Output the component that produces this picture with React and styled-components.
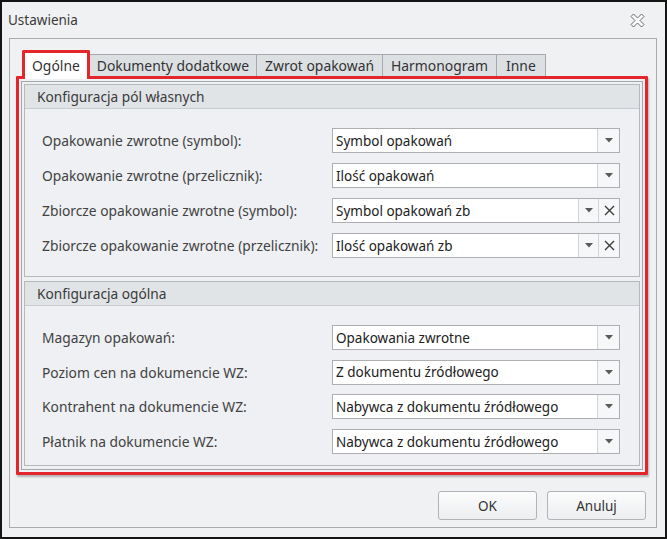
import React from 'react';
import styled, { createGlobalStyle } from 'styled-components';

const GlobalStyle = createGlobalStyle`
  html, body {
    margin: 0;
    padding: 0;
    background: #ffffff;
  }
  * {
    box-sizing: border-box;
  }
`;

const Window = styled.div`
  width: 667px;
  height: 539px;
  border: 2px solid #151515;
  background: #f0f1f2;
  font-family: 'Noto Sans', 'DejaVu Sans', sans-serif;
  font-size: 13.7px;
  color: #3a3a3a;
  display: flex;
  flex-direction: column;
`;

const TitleBar = styled.div`
  height: 36px;
  flex: none;
  display: flex;
  align-items: center;
  justify-content: space-between;
  padding: 0 20px 0 6px;
`;

const Title = styled.span`
  font-size: 13.5px;
  color: #3a3a3a;
`;

const Frame = styled.div`
  flex: 1;
  margin: 0 8px 9px 7px;
  border: 1px solid #a9abae;
  display: flex;
  flex-direction: column;
  padding: 11px 8px 0 6px;
`;

const TabStrip = styled.div`
  display: flex;
  align-items: flex-end;
  height: 26px;
  padding-left: 6px;
  position: relative;
  z-index: 1;
`;

const Tab = styled.div`
  height: ${(p) => (p.active ? '29px' : '22px')};
  margin-bottom: ${(p) => (p.active ? '-3px' : '0')};
  padding: 0 ${(p) => p.pad}px;
  display: flex;
  align-items: ${(p) => (p.active ? 'flex-start' : 'center')};
  padding-top: ${(p) => (p.active ? '3px' : '0')};
  background: ${(p) => (p.active ? '#ffffff' : '#dde0e3')};
  border: ${(p) => (p.active ? '3px solid #e3262b' : '1px solid #a5a8ac')};
  border-bottom: none;
  border-right: ${(p) => (p.active ? '3px solid #e3262b' : '1px solid #a5a8ac')};
  border-left: ${(p) => (p.active ? '3px solid #e3262b' : 'none')};
  border-radius: ${(p) => (p.active ? '2px 2px 0 0' : '0')};
  white-space: nowrap;
  color: #333;
  font-size: 13.9px;
`;

const Highlight = styled.div`
  border: 3px solid #e3262b;
  border-radius: 1px;
  padding: 2px;
  box-shadow: 1px 2px 2px rgba(0, 0, 0, 0.25);
`;

const TabPage = styled.div`
  border: 1px solid #a3a6aa;
  background: #eef0f2;
  padding: 2px 2px 3px 2px;
  display: flex;
  flex-direction: column;
  gap: 4px;
`;

const Group = styled.section`
  border: 1px solid #b5b8bc;
  background: #eef0f3;
`;

const GroupHeader = styled.div`
  height: 24px;
  display: flex;
  align-items: center;
  padding-left: 12px;
  background: #e1e4e7;
  border-bottom: 1px solid #c9ccd0;
  font-size: 13.7px;
  color: #3a3a3a;
`;

const GroupBody = styled.div`
  display: grid;
  grid-template-columns: 290px 288px;
  row-gap: ${(p) => p.gap}px;
  padding: 19px 0 ${(p) => p.bottom}px 17px;
  align-items: center;
`;

const Label = styled.span`
  font-size: 13.8px;
  color: #424242;
  white-space: nowrap;
`;

const Combo = styled.div`
  height: 25px;
  display: flex;
  border: 1px solid #acaeb1;
  background: #ffffff;
`;

const ComboText = styled.span`
  flex: 1;
  display: flex;
  align-items: center;
  padding-left: 3px;
  font-size: 13.5px;
  color: #222;
  white-space: nowrap;
  overflow: hidden;
`;

const ComboButton = styled.span`
  width: ${(p) => p.w}px;
  flex: none;
  display: flex;
  align-items: center;
  justify-content: center;
  border-left: 1px solid #d2d4d7;
  background: #f6f7f8;
`;

const Footer = styled.div`
  display: flex;
  justify-content: flex-end;
  gap: 10px;
  padding: 16px 2px 0 0;
`;

const Button = styled.button`
  width: 99px;
  height: 29px;
  border: 1px solid #b0b3b7;
  border-radius: 3px;
  background: linear-gradient(#fcfcfc, #eceef0);
  font-family: 'Noto Sans', 'DejaVu Sans', sans-serif;
  font-size: 13.5px;
  color: #333;
  padding: 0;
`;

const CloseIcon = () => (
  <svg width="15" height="15" viewBox="0 0 15 15">
    <polygon
      points="1,3.5 3.5,1 7.5,5 11.5,1 14,3.5 10,7.5 14,11.5 11.5,14 7.5,10 3.5,14 1,11.5 5,7.5"
      fill="#fafafa"
      stroke="#6a6a6a"
      strokeWidth="1"
      strokeLinejoin="round"
    />
  </svg>
);

const DownArrow = () => (
  <svg width="8" height="5" viewBox="0 0 8 5">
    <polygon points="0,0 8,0 4,4.5" fill="#5a5a5a" />
  </svg>
);

const ClearGlyph = () => (
  <svg width="11" height="11" viewBox="0 0 11 11">
    <path d="M1 1 L10 10 M10 1 L1 10" stroke="#3c3c3c" strokeWidth="1.4" />
  </svg>
);

function ComboBox({ value, clearable }) {
  return (
    <Combo>
      <ComboText>{value}</ComboText>
      <ComboButton w={clearable ? 20 : 22}>
        <DownArrow />
      </ComboButton>
      {clearable ? (
        <ComboButton w={21}>
          <ClearGlyph />
        </ComboButton>
      ) : null}
    </Combo>
  );
}

const customFields = [
  ['Opakowanie zwrotne (symbol):', 'Symbol opakowań', false],
  ['Opakowanie zwrotne (przelicznik):', 'Ilość opakowań', false],
  ['Zbiorcze opakowanie zwrotne (symbol):', 'Symbol opakowań zb', true],
  ['Zbiorcze opakowanie zwrotne (przelicznik):', 'Ilość opakowań zb', true],
];

const generalFields = [
  ['Magazyn opakowań:', 'Opakowania zwrotne'],
  ['Poziom cen na dokumencie WZ:', 'Z dokumentu źródłowego'],
  ['Kontrahent na dokumencie WZ:', 'Nabywca z dokumentu źródłowego'],
  ['Płatnik na dokumencie WZ:', 'Nabywca z dokumentu źródłowego'],
];

const tabs = [
  ['Ogólne', 7],
  ['Dokumenty dodatkowe', 7],
  ['Zwrot opakowań', 8],
  ['Harmonogram', 8],
  ['Inne', 9],
];

export default function App() {
  return (
    <>
      <GlobalStyle />
      <Window>
        <TitleBar>
          <Title>Ustawienia</Title>
          <CloseIcon />
        </TitleBar>
        <Frame>
          <TabStrip>
            {tabs.map(([name, pad], i) => (
              <Tab key={name} active={i === 0} pad={pad}>
                {name}
              </Tab>
            ))}
          </TabStrip>
          <Highlight>
            <TabPage>
              <Group>
                <GroupHeader>Konfiguracja pól własnych</GroupHeader>
                <GroupBody gap={10} bottom={18}>
                  {customFields.map(([label, value, clearable]) => (
                    <React.Fragment key={label}>
                      <Label>{label}</Label>
                      <ComboBox value={value} clearable={clearable} />
                    </React.Fragment>
                  ))}
                </GroupBody>
              </Group>
              <Group>
                <GroupHeader>Konfiguracja ogólna</GroupHeader>
                <GroupBody gap={9.7} bottom={11}>
                  {generalFields.map(([label, value]) => (
                    <React.Fragment key={label}>
                      <Label>{label}</Label>
                      <ComboBox value={value} />
                    </React.Fragment>
                  ))}
                </GroupBody>
              </Group>
            </TabPage>
          </Highlight>
          <Footer>
            <Button>OK</Button>
            <Button>Anuluj</Button>
          </Footer>
        </Frame>
      </Window>
    </>
  );
}
